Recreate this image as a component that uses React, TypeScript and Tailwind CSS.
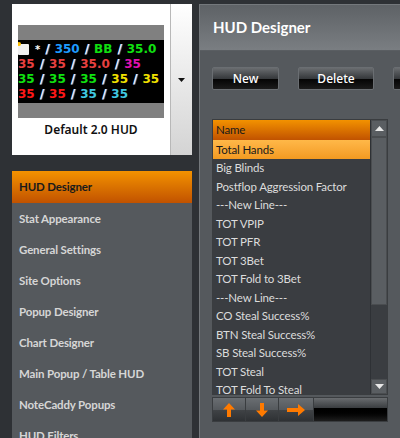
import React from 'react';

const menuItems = [
  'HUD Designer',
  'Stat Appearance',
  'General Settings',
  'Site Options',
  'Popup Designer',
  'Chart Designer',
  'Main Popup / Table HUD',
  'NoteCaddy Popups',
  'HUD Filters',
];

const statRows = [
  'Total Hands',
  'Big Blinds',
  'Postflop Aggression Factor',
  '---New Line---',
  'TOT VPIP',
  'TOT PFR',
  'TOT 3Bet',
  'TOT Fold to 3Bet',
  '---New Line---',
  'CO Steal Success%',
  'BTN Steal Success%',
  'SB Steal Success%',
  'TOT Steal',
  'TOT Fold To Steal',
];

type Seg = { t: string; c: string };

const previewLines: Seg[][] = [
  [
    { t: '350', c: 'text-[#1e9bff]' },
    { t: 'BB', c: 'text-[#10e010]' },
    { t: '35.0', c: 'text-[#10e010]' },
  ],
  [
    { t: '35', c: 'text-[#e84040]' },
    { t: '35', c: 'text-[#e84040]' },
    { t: '35.0', c: 'text-[#e84040]' },
    { t: '35', c: 'text-[#e010b0]' },
  ],
  [
    { t: '35', c: 'text-[#10e010]' },
    { t: '35', c: 'text-[#10e010]' },
    { t: '35', c: 'text-[#10e010]' },
    { t: '35', c: 'text-[#f0e000]' },
    { t: '35', c: 'text-[#f0e000]' },
  ],
  [
    { t: '35', c: 'text-[#ff1818]' },
    { t: '35', c: 'text-[#ff1818]' },
    { t: '35', c: 'text-[#40c8e0]' },
    { t: '35', c: 'text-[#40c8e0]' },
  ],
];

function Slash() {
  return <span className="text-white mx-[5px] [text-shadow:1px_0_0_#3a7ad0]">/</span>;
}

function HudPreview() {
  return (
    <div className="w-[146px] h-[93px] bg-[#808080] flex flex-col justify-center overflow-hidden">
      <div className="h-[63px] bg-black flex flex-col justify-center font-['DejaVu_Sans',sans-serif] font-bold text-[12px] leading-[15px] whitespace-nowrap">
        {previewLines.map((line, i) => (
          <div key={i} className="flex items-center">
            {i === 0 && (
              <>
                <span className="relative inline-block w-[11px] h-[11px] bg-[#f0f0f0] rounded-[1px] mr-[6px]">
                  <span className="absolute -top-[2px] -left-[1px] w-[4px] h-[4px] bg-[#ffc000] rounded-full" />
                </span>
                <span className="text-white text-[10px]">*</span>
                <Slash />
              </>
            )}
            {line.map((s, j) => (
              <React.Fragment key={j}>
                {j > 0 && <Slash />}
                <span className={s.c}>{s.t}</span>
              </React.Fragment>
            ))}
          </div>
        ))}
      </div>
    </div>
  );
}

function ArrowUp() {
  return (
    <svg width="12" height="14" viewBox="0 0 12 14">
      <path d="M6 0 L12 6.5 L8 6.5 L8 14 L4 14 L4 6.5 L0 6.5 Z" fill="#ff7a00" />
    </svg>
  );
}

function ArrowDown() {
  return (
    <svg width="12" height="14" viewBox="0 0 12 14">
      <path d="M6 14 L12 7.5 L8 7.5 L8 0 L4 0 L4 7.5 L0 7.5 Z" fill="#ff7a00" />
    </svg>
  );
}

function ArrowRight() {
  return (
    <svg width="18" height="12" viewBox="0 0 18 12">
      <path d="M18 6 L11 0 L11 4 L0 4 L0 8 L11 8 L11 12 Z" fill="#ff7a00" />
    </svg>
  );
}

function GlossButton({ label, width }: { label: string; width: string }) {
  return (
    <div className={`${width} shrink-0 h-[23px] rounded-[2px] border border-[#6a6e72] flex flex-col overflow-hidden relative`}>
      <div className="flex-1 bg-gradient-to-b from-[#6a6d70] to-[#34373a]" />
      <div className="flex-1 bg-gradient-to-b from-[#050505] to-[#1c1c1c]" />
      <span className="absolute inset-0 flex items-center justify-center text-white text-[12px] font-medium font-['Noto_Sans',sans-serif]">
        {label}
      </span>
    </div>
  );
}

export default function App() {
  return (
    <div className="w-[400px] h-[438px] bg-[#2e3135] flex overflow-hidden font-['Lato',sans-serif]">
      {/* Left column */}
      <div className="w-[180px] ml-[12px] mt-[4px] flex flex-col shrink-0 min-h-0">
        <div className="h-[151px] shrink-0 bg-white flex">
          <div className="flex-1 flex flex-col items-center pt-[21px]">
            <HudPreview />
            <div className="mt-[3px] text-[12px] font-semibold text-[#111] font-['Noto_Sans',sans-serif]">
              Default 2.0 HUD
            </div>
          </div>
          <div className="w-[22px] border-l border-[#b8b8b8] bg-gradient-to-b from-white to-[#d4d4d4] flex items-center justify-center">
            <svg width="7" height="4" viewBox="0 0 7 4">
              <path d="M0 0 L7 0 L3.5 4 Z" fill="#111" />
            </svg>
          </div>
        </div>
        <div className="mt-[16px] flex-1 min-h-0 overflow-hidden bg-[#55595d] flex flex-col">
          {menuItems.map((m, i) => (
            <div
              key={m}
              className={`shrink-0 flex items-center px-[7px] text-[11.5px] tracking-[-0.15px] font-bold ${
                i === 0
                  ? 'bg-gradient-to-b from-[#f39200] to-[#c15200] text-[#1a1a1a] h-[32px]'
                  : 'text-[#d6d6d6] h-[31px]'
              }`}
            >
              {m}
            </div>
          ))}
        </div>
      </div>

      {/* Right panel */}
      <div className="w-[230px] ml-[7px] mt-[4px] shrink-0 border-l border-t border-[#74787c] bg-[#55595d] flex flex-col">
        <div className="h-[46px] shrink-0 bg-gradient-to-b from-[#5e6266] to-[#7a7e82] flex items-center pl-[13px] border-b border-[#5a5e62]">
          <span className="text-white text-[15px] font-bold">HUD Designer</span>
        </div>

        <div className="mt-[16px] pl-[12px] flex gap-[19px]">
          <GlossButton label="New" width="w-[67px]" />
          <GlossButton label="Delete" width="w-[76px]" />
          <GlossButton label="" width="w-[60px]" />
        </div>

        <div className="mt-[29px] ml-[12px] w-[176px] h-[276px] shrink-0 flex border border-[#3a3d40]">
          <div className="flex-1 bg-[#3a3d41] flex flex-col overflow-hidden">
            <div className="h-[20px] shrink-0 bg-gradient-to-b from-[#f39200] to-[#c15200] flex items-center px-[3px] text-[11.5px] tracking-[-0.15px] text-[#1a1a1a]">
              Name
            </div>
            {statRows.map((r, i) => (
              <div
                key={i}
                className={`h-[18.5px] shrink-0 flex items-center px-[3px] text-[11.5px] tracking-[-0.15px] whitespace-nowrap ${
                  i === 0 ? 'bg-gradient-to-b from-[#ffb848] to-[#f39a20] text-[#1a1a1a]' : 'text-[#dcdcdc]'
                }`}
              >
                {r}
              </div>
            ))}
          </div>
          <div className="w-[17px] flex flex-col bg-[#3a3d41] border-l border-[#2e3135]">
            <div className="h-[17px] bg-[#5a5e62] border border-[#4a4d50] flex items-center justify-center">
              <svg width="9" height="5" viewBox="0 0 9 5">
                <path d="M0 5 L9 5 L4.5 0 Z" fill="#e8e8e8" />
              </svg>
            </div>
            <div className="h-[168px] bg-[#5a5e62] border border-[#4a4d50]" />
            <div className="flex-1" />
            <div className="h-[15px] bg-[#5a5e62] border border-[#4a4d50] flex items-center justify-center">
              <svg width="9" height="5" viewBox="0 0 9 5">
                <path d="M0 0 L9 0 L4.5 5 Z" fill="#e8e8e8" />
              </svg>
            </div>
          </div>
        </div>

        <div className="mt-[2px] ml-[12px] w-[176px] h-[25px] shrink-0 flex border border-[#3a3d40]">
          {[<ArrowUp key="u" />, <ArrowDown key="d" />, <ArrowRight key="r" />].map((icon, i) => (
            <div
              key={i}
              className={`${i === 2 ? 'w-[35px]' : 'w-[33px]'} relative flex flex-col border-r border-[#3a3d40]`}
            >
              <div className="flex-1 bg-gradient-to-b from-[#6a6e72] to-[#55595d]" />
              <div className="flex-1 bg-gradient-to-b from-[#404346] to-[#2e3134]" />
              <span className="absolute inset-0 flex items-center justify-center">{icon}</span>
            </div>
          ))}
          <div className="flex-1 flex flex-col">
            <div className="h-[10px] bg-gradient-to-b from-[#6a6d70] to-[#3a3d40]" />
            <div className="flex-1 bg-gradient-to-b from-black to-[#1e1e1e]" />
          </div>
        </div>
      </div>
    </div>
  );
}
